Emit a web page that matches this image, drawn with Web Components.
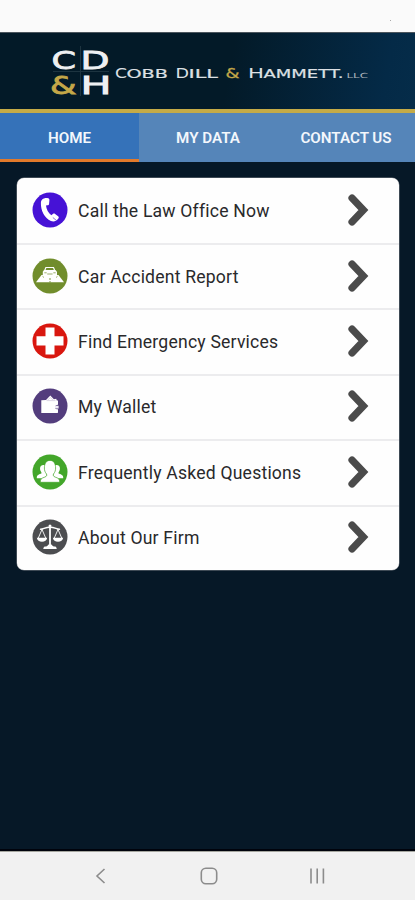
<!DOCTYPE html>
<html lang="en">
<head>
<meta charset="utf-8">
<meta name="viewport" content="width=device-width, initial-scale=1">
<title>Cobb Dill &amp; Hammett</title>
<style>
  html, body {
    margin: 0;
    height: 100%;
  }

  body {
    overflow: hidden;
    background: #061827;
    font-family: Roboto, "Liberation Sans", sans-serif;
  }
</style>
</head>
<body>
<law-app>
  <firm-header slot="header"></firm-header>
  <tab-bar slot="tabs">
    <tab-item active>HOME</tab-item>
    <tab-item>MY DATA</tab-item>
    <tab-item>CONTACT US</tab-item>
  </tab-bar>
  <menu-card>
    <menu-row icon="phone">Call the Law Office Now</menu-row>
    <menu-row icon="car">Car Accident Report</menu-row>
    <menu-row icon="cross">Find Emergency Services</menu-row>
    <menu-row icon="wallet">My Wallet</menu-row>
    <menu-row icon="people">Frequently Asked Questions</menu-row>
    <menu-row icon="scales">About Our Firm</menu-row>
  </menu-card>
  <system-nav slot="nav"></system-nav>
</law-app>

<script>
/**
 * App shell: status bar, header, tabs, content and system navigation
 */
class LawApp extends HTMLElement {
  connectedCallback() {
    this.attachShadow({ mode: 'open' });
    this.shadowRoot.innerHTML = `
      <style>
        :host {
          display: flex;
          flex-direction: column;
          height: 100vh;
        }

        .status {
          display: flex;
          flex: none;
          align-items: center;
          justify-content: flex-end;
          height: 33px;
          box-sizing: border-box;
          padding: 9px 24px 0 0;
          background: #fafafa;
          border-bottom: 1px solid #4b555d;
        }

        .dot {
          width: 1px;
          height: 1px;
          background: #a8a8a8;
        }

        main {
          flex: 1;
          padding: 15.500px 16px 0 16.500px;
          background: #061827;
          border-bottom: 2px solid #00030c;
        }
      </style>

      <div class="status"><span class="dot"></span></div>
      <slot name="header"></slot>
      <slot name="tabs"></slot>
      <main><slot></slot></main>
      <slot name="nav"></slot>
    `;
  }
}

/**
 * Firm logo and wordmark on the navy banner
 */
class FirmHeader extends HTMLElement {
  connectedCallback() {
    this.attachShadow({ mode: 'open' });
    this.shadowRoot.innerHTML = `
      <style>
        :host {
          display: block;
          flex: none;
          box-sizing: border-box;
          height: 80px;
          background: linear-gradient(100deg, #031a28 0%, #031a28 55%, #042a47 92%, #052c49 100%);
          border-bottom: 4px solid #c5ab47;
        }

        svg {
          display: block;
          font-family: "DejaVu Sans", sans-serif;
          fill: #eef0f2;
        }

        .mono { font-size: 25px; stroke: #eef0f2; stroke-width: 0.8; }
        .cap { font-size: 14.5px; fill: #dde0e4; }
        .small { font-size: 11.5px; stroke: #dde0e4; stroke-width: 0.2; fill: #dde0e4; }
        .gold { fill: #c4a748; stroke: #c4a748; }
        .cap.gold { stroke-width: 0.3; }
        .llc { font-size: 7px; fill: #aab3ba; }
      </style>

      <svg width="415" height="76" viewBox="0 33 415 76">
        <path d="M80.500 46v50M53 71.500h56" stroke="#1d3440" fill="none"/>
        <text class="mono"><tspan x="51.500" y="68.600" textLength="24.500" lengthAdjust="spacingAndGlyphs">C</tspan><tspan x="80.500" y="68.600" textLength="29" lengthAdjust="spacingAndGlyphs">D</tspan><tspan class="gold" x="50" y="93.800" textLength="26.500" lengthAdjust="spacingAndGlyphs">&amp;</tspan><tspan x="80.500" y="93.800" textLength="31" lengthAdjust="spacingAndGlyphs">H</tspan></text>
        <text class="cap" x="115" y="77.600" textLength="12" lengthAdjust="spacingAndGlyphs">C</text>
        <text class="small" x="126.500" y="77.600" textLength="41.500" lengthAdjust="spacingAndGlyphs">OBB</text>
        <text class="cap" x="175.500" y="77.600" textLength="13.500" lengthAdjust="spacingAndGlyphs">D</text>
        <text class="small" x="188.500" y="77.600" textLength="29.500" lengthAdjust="spacingAndGlyphs">ILL</text>
        <text class="cap gold" x="225.500" y="77.600" textLength="14" lengthAdjust="spacingAndGlyphs">&amp;</text>
        <text class="cap" x="248" y="77.600" textLength="16" lengthAdjust="spacingAndGlyphs">H</text>
        <text class="small" x="263.500" y="77.600" textLength="80" lengthAdjust="spacingAndGlyphs">AMMETT.</text>
        <text class="llc" x="346.500" y="77.600" textLength="21.500" lengthAdjust="spacingAndGlyphs">LLC</text>
      </svg>
    `;
  }
}

class TabBar extends HTMLElement {
  connectedCallback() {
    this.attachShadow({ mode: 'open' });
    this.shadowRoot.innerHTML = `
      <style>
        :host {
          display: grid;
          flex: none;
          grid-template-columns: 139px 138px 138px;
          height: 49px;
          background: #5585b9;
        }
      </style>
      <slot></slot>
    `;
  }
}

class TabItem extends HTMLElement {
  connectedCallback() {
    this.attachShadow({ mode: 'open' });
    this.shadowRoot.innerHTML = `
      <style>
        :host {
          display: flex;
          align-items: center;
          justify-content: center;
          box-sizing: border-box;
          padding-top: 4px;
          border-bottom: 3px solid transparent;
          color: #f3f7fc;
          font-size: 15.200px;
          font-weight: 600;
          white-space: nowrap;
        }

        :host([active]) {
          background: #3572b9;
          border-bottom-color: #e27a2b;
        }
      </style>
      <slot></slot>
    `;
  }
}

class MenuCard extends HTMLElement {
  connectedCallback() {
    this.attachShadow({ mode: 'open' });
    this.shadowRoot.innerHTML = `
      <style>
        :host {
          display: grid;
          grid-template-rows: repeat(6, 1fr);
          height: 392.500px;
          border-radius: 7px;
          background: #fefefe;
          box-shadow: 0 0 0 0.500px #777c84;
          overflow: hidden;
        }

        ::slotted(:not(:first-child)) {
          box-shadow: inset 0 2px #ececee;
        }
      </style>
      <slot></slot>
    `;
  }
}

// Round badges, drawn on a 36 unit grid
const ICONS = {
  phone: `
    <circle cx="18" cy="18" r="17.500" fill="#4612d6"/>
    <path fill="#fff" d="M10.200 7.500c1.500-1.300 3.500-1.800 6-1.300 1 .3 1.300 1 1.200 2l-.3 3.500c-.1 1-.7 1.500-1.600 1.600l-1.500.3c.4 4 2.300 7.200 5.300 9.600l1.600-1.300c.7-.6 1.500-.6 2.200 0l3 2.400c.8.700.9 1.400.3 2.200-1.900 2.700-4.700 3.500-7.500 2.500C12.500 26.300 8.600 18.500 8.900 11c0-1.300.4-2.600 1.300-3.500z"/>
    <path fill="none" stroke="#4612d6" stroke-width=".6" d="M20.800 25.500l3.600 2.900"/>`,
  car: `
    <circle cx="18" cy="18" r="17.500" fill="#718d2c"/>
    <path fill="none" stroke="#fff" stroke-width="1.200" d="M12.800 12.300l1.100-2.800h7.600l1.100 2.800"/>
    <path fill="#fff" d="M12 12h11.500l1.500 1.800v4.500H10.800v-4.500z"/>
    <path fill="#fff" d="M9.500 17h17l5.500 7.300H4z"/>
    <path fill="none" stroke="#718d2c" stroke-width=".7" d="M12.300 14.800h2.400M21.300 14.800h2.400M15.200 16h5.400M10.500 18.300l1.500 1.200M25.500 18.300l-1.500 1.200"/>
    <path fill="none" stroke="#718d2c" stroke-width=".9" stroke-dasharray="2 1" d="M18 20v4.500"/>`,
  cross: `
    <circle cx="18" cy="18" r="17.500" fill="#d9170f"/>
    <path fill="#fff" d="M13.500 4.500h9v8.800h9v9.200h-9v9h-9v-9h-9v-9.200h9z"/>`,
  wallet: `
    <circle cx="18" cy="18" r="17.500" fill="#533d7d"/>
    <path fill="#fff" d="M9.300 12.300l4.700-.4 4.300-4.400 3.600 3.800 2.300-.5.600 1.700h1.200v4.300c-1.800.1-3 1-3 2.400s1.200 2.100 3 2.100v3.400l-1 .4H9.300z"/>
    <path fill="#eeeaf4" d="M23.600 17.700h3v2.900h-2.700c-1.300-.6-1.300-2.300-.3-2.900z"/>
    <path fill="none" stroke="#b9aecb" stroke-width=".5" d="M14.500 12.600h9M15.800 12l2.500-2.500 2.500 2.500"/>`,
  people: `
    <circle cx="18" cy="18" r="17.500" fill="#43a62a"/>
    <path fill="#fff" d="M4.800 23.300c0-1.800 1.200-2.700 4.600-3.800.3-.8 0-1.400-.6-2.300-1.200-2-1.300-6.200 2.600-6.300 1.300 0 2.200.5 2.700 1.400v5.500l.8 6.500H4.800zM31.200 23.300c0-1.800-1.200-2.700-4.600-3.800-.3-.8 0-1.400.6-2.300 1.200-2 1.300-6.200-2.600-6.300-1.300 0-2.200.5-2.700 1.400v5.500l-.8 6.500h10.100z"/>
    <path fill="#fff" stroke="#43a62a" stroke-width=".7" d="M8.300 28.300c-.1-3.300 1.400-4.200 4.500-5.200 2.200-.8 2.300-2.200 1.400-3.500-1.100-1.500-1.800-3-1.800-5.600 0-4.700 2-7.600 5.600-7.600s5.600 2.900 5.600 7.600c0 2.600-.7 4.100-1.800 5.600-.9 1.300-.8 2.700 1.400 3.500 3.100 1 4.600 1.900 4.500 5.200z"/>`,
  scales: `
    <circle cx="18" cy="18" r="17.500" fill="#4c4d50"/>
    <g fill="none" stroke="#fff" stroke-linecap="round" stroke-linejoin="round">
      <path stroke-width="1.800" d="M18 7v19.500"/>
      <path stroke-width="1.400" d="M8.500 10.300c3.500-.2 4.300-2 9.500-2s6 1.800 9.500 2"/>
      <path stroke-width=".9" d="M10 10.500L6.300 19M10 10.500l3.700 8.500M26 10.500L22.300 19M26 10.500l3.700 8.500"/>
    </g>
    <circle cx="18" cy="7" r="1.500" fill="#fff"/>
    <path fill="#fff" d="M4.800 18.700h10.400c-.4 2.700-2.500 4-5.200 4s-4.800-1.300-5.200-4zM20.800 18.700h10.400c-.4 2.700-2.500 4-5.200 4s-4.800-1.300-5.200-4zM16.500 25.500h3l1.500 1.800 3 .4.800 2.300H11.200l.8-2.300 3-.4z"/>`
};

/**
 * One tappable menu entry: badge, label and chevron
 */
class MenuRow extends HTMLElement {
  connectedCallback() {
    this.attachShadow({ mode: 'open' });
    const icon = ICONS[this.getAttribute('icon')] || '';
    this.shadowRoot.innerHTML = `
      <style>
        :host {
          display: flex;
          align-items: center;
          box-sizing: border-box;
          padding: 0 29.500px 0 15.500px;
          color: #29292b;
          font-size: 17.600px;
          letter-spacing: 0.2px;
        }

        svg {
          display: block;
          flex: none;
        }

        .label {
          flex: 1;
          margin-left: 10px;
          padding-top: 2px;
          white-space: nowrap;
        }
      </style>

      <svg width="36" height="36" viewBox="0 0 36 36">${icon}</svg>
      <span class="label"><slot></slot></span>
      <svg width="24" height="34" viewBox="0 0 24 34">
        <path d="M6 5L17.400 17 6 29" fill="none" stroke="#4b4b4b" stroke-width="7.200" stroke-linecap="round"/>
      </svg>
    `;
  }
}

class SystemNav extends HTMLElement {
  connectedCallback() {
    this.attachShadow({ mode: 'open' });
    this.shadowRoot.innerHTML = `
      <style>
        :host {
          display: flex;
          flex: none;
          align-items: center;
          justify-content: center;
          gap: 88px;
          box-sizing: border-box;
          height: 49px;
          padding-left: 2px;
          background: #f1f1f1;
          border-top: 1px solid #a5a69f;
        }

        svg {
          fill: none;
          stroke: #8c8c8c;
          stroke-width: 1.600;
        }
      </style>

      <svg width="20" height="20" viewBox="0 0 20 20"><path d="M13.500 3L6 10l7.500 7"/></svg>
      <svg width="20" height="20" viewBox="0 0 20 20"><rect x="2.300" y="2.300" width="15.400" height="15.400" rx="4.500"/></svg>
      <svg width="20" height="20" viewBox="0 0 20 20"><path d="M4 2.500v15M10.200 2.500v15M16.400 2.500v15"/></svg>
    `;
  }
}

// Define the custom elements
customElements.define('law-app', LawApp);
customElements.define('firm-header', FirmHeader);
customElements.define('tab-bar', TabBar);
customElements.define('tab-item', TabItem);
customElements.define('menu-card', MenuCard);
customElements.define('menu-row', MenuRow);
customElements.define('system-nav', SystemNav);
</script>
</body>
</html>
